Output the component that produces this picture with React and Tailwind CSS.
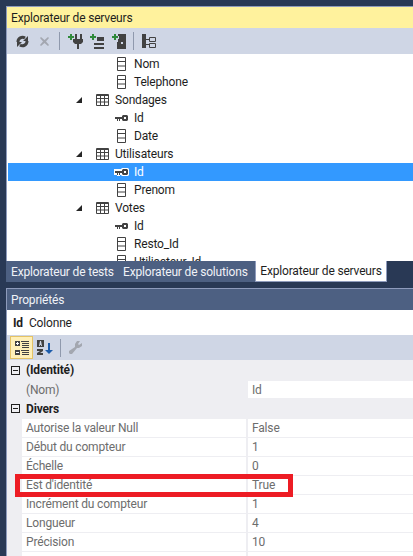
import React from 'react';

const ColumnIcon = () => (
    <svg width="9" height="14" viewBox="0 0 9 14" className="shrink-0" fill="none" stroke="#424242">
        <path d="M.5.5h8v13h-8zM.5 4.500h8M.5 9h8" />
    </svg>
);

const KeyIcon = ({ light }) => (
    <svg width="15" height="8" viewBox="0 0 15 8" className="shrink-0">
        {light && <path d="M0 1h7l1-1h6l1 1v6l-1 1h-6l-1-1h-1v1h-3v-1h-3z" fill="#fff" />}
        <path d="M1 3h7v2h-2v2h-1v-2h-1v2h-1v-2h-2z" fill="#424242" />
        <path fillRule="evenodd" d="M8 2l1-1h4l1 1v4l-1 1h-4l-1-1zM10 3v2h2v-2z" fill="#424242" />
    </svg>
);

const TableIcon = () => (
    <svg width="13" height="12" viewBox="0 0 13 12" className="shrink-0" fill="none" stroke="#424242">
        <path d="M.5.5h12v11h-12zM.5 1.500h12M.5 4.500h12M.5 8h12M4.500 1v10M8.500 1v10" />
    </svg>
);

const Triangle = () => (
    <svg width="6" height="6" viewBox="0 0 6 6" className="shrink-0">
        <path d="M6 0v6h-6z" fill="#262626" />
    </svg>
);

const Plus = ({ y = 0 }) => (
    <path d={`M2 ${y}h2v2h2v2h-2v2h-2v-2h-2v-2h2z`} fill="#2f8a3b" />
);

const RefreshIcon = () => (
    <svg width="13" height="13" viewBox="0 0 13 13" className="shrink-0" fill="none">
        <path d="M2 7a4.500 4.500 0 0 1 7-4" stroke="#424242" strokeWidth="3" />
        <path d="M11 6a4.500 4.500 0 0 1-7 4" stroke="#424242" strokeWidth="3" />
        <path d="M12 1v5h-5zM1 12v-5h5z" fill="#424242" />
    </svg>
);

const PlugIcon = () => (
    <svg width="15" height="15" viewBox="0 0 15 15" className="shrink-0">
        <Plus />
        <path d="M7 0h2v5h3v-5h2v5h1v3l-2 2h-2v6h-2v-6h-2l-2-2v-3h2z" fill="#424242" />
    </svg>
);

const ServerIcon = () => (
    <svg width="14" height="15" viewBox="0 0 14 15" className="shrink-0">
        <Plus />
        <path d="M7 3h7v4h-7zM4 9h10v2h-10zM4 13h10v2h-10z" fill="#424242" />
    </svg>
);

const DbIcon = () => (
    <svg width="14" height="15" viewBox="0 0 14 15" className="shrink-0">
        <path d="M6 0h8v15h-9v-7h1z" fill="#424242" />
        <path d="M9 8h2v2h-2z" fill="#cfd6e5" />
        <path d="M0 2h2v-2h3v2h2v3h-2v2h-3v-2h-2z" fill="#cfd6e5" />
        <Plus y={0} />
    </svg>
);

const HierarchyIcon = () => (
    <svg width="14" height="14" viewBox="0 0 14 14" className="shrink-0" fill="none">
        <path d="M0 0h4v14h-4z" fill="#424242" />
        <path d="M4 5.500h3M4 10.500h3M7.500 3.500h6v4h-6zM7.500 9.500h6v4h-6z" stroke="#424242" />
    </svg>
);

const CategorizedIcon = () => (
    <svg width="14" height="14" viewBox="0 0 14 14" className="shrink-0">
        <path d="M0 0h5v5h-5zM0 9h5v5h-5z" fill="#424242" />
        <path d="M1 2h3v1h-3zM1 11h3v1h-3zM2 1h1v3h-1z" fill="#fff" />
        <path d="M6 0h8v1h-8zM7 2h7v1h-7zM7 4h7v1h-7zM7 6h7v1h-7zM6 9h8v1h-8zM7 11h7v1h-7zM7 13h7v1h-7z" fill="#424242" />
    </svg>
);

const AlphaIcon = () => (
    <svg width="16" height="15" viewBox="0 0 16 15" className="shrink-0">
        <path d="M0 0h7v7h-7z" fill="#424242" />
        <path d="M3 1h1l1 5h-1v-1h-1v1h-1z" fill="#cfd6e5" />
        <path d="M0 9h6v2l-3 2h3v2h-6v-2l3-2h-3z" fill="#424242" />
        <path d="M11 3h2v7h3l-4 4-4-4h3z" fill="#1c5cab" />
    </svg>
);

const WrenchIcon = () => (
    <svg width="13" height="13" viewBox="0 0 13 13" className="shrink-0">
        <path d="M8 0h3l-2 3 1 1 3-2v3l-3 2h-2l-5 6h-2l-1-1v-2l6-4v-3z" fill="#a3a7b0" />
    </svg>
);

const MinusBox = () => (
    <div className="flex h-[9px] w-[9px] shrink-0 items-center justify-center border border-[#1e1e1e]">
        <div className="h-px w-[5px] bg-[#1e1e1e]" />
    </div>
);

const Separator = ({ className }) => <div className={`h-[18px] w-px bg-[#8f99ad] ${className}`} />;

const treeRows = [
    { kind: 'column', label: 'Nom' },
    { kind: 'column', label: 'Telephone' },
    { kind: 'table', label: 'Sondages' },
    { kind: 'key', label: 'Id' },
    { kind: 'column', label: 'Date' },
    { kind: 'table', label: 'Utilisateurs' },
    { kind: 'key', label: 'Id', selected: true },
    { kind: 'column', label: 'Prenom' },
    { kind: 'table', label: 'Votes' },
    { kind: 'key', label: 'Id' },
    { kind: 'column', label: 'Resto_Id' },
    { kind: 'column', label: 'Utilisateur_Id' },
];

function TreeRow({ kind, label, selected }) {
    if (kind === 'table') {
        return (
            <div className="flex h-[18px] shrink-0 items-center pl-[68px] text-[#1e1e1e]">
                <Triangle />
                <div className="ml-[14px]"><TableIcon /></div>
                <span className="ml-[6px]">{label}</span>
            </div>
        );
    }
    return (
        <div className={`flex h-[18px] shrink-0 items-center pl-[100px] ${selected ? 'bg-[#3399ff] text-white' : 'text-[#1e1e1e]'}`}>
            <div className="flex w-[26px] shrink-0 justify-center">
                {kind === 'key' ? <KeyIcon light={selected} /> : <ColumnIcon />}
            </div>
            <span>{label}</span>
        </div>
    );
}

const props = [
    ['Autorise la valeur Null', 'False'],
    ['Début du compteur', '1'],
    ['Échelle', '0'],
    ["Est d'identité", 'True'],
    ['Incrément du compteur', '1'],
    ['Longueur', '4'],
    ['Précision', '10'],
    ['', ''],
];

function PropRow({ name, value }) {
    return (
        <div className="flex h-[19px] shrink-0 border-b border-[#eeeef2] bg-white text-[#6d6d6d]">
            <div className="flex w-[226px] shrink-0 items-center border-r-2 border-[#eeeef2] pl-[4px]">{name}</div>
            <div className="flex items-center pl-[4px]">{value}</div>
        </div>
    );
}

export default function App() {
    return (
        <div className="relative flex h-[556px] w-[413px] flex-col overflow-hidden whitespace-nowrap bg-[#293955] pl-[6px] pt-[6px] font-['Roboto',sans-serif] text-[12px] tracking-[-0.17px]">
            {/* Explorateur de serveurs */}
            <div className="flex h-[255px] shrink-0 flex-col border-l border-t border-[#8e9bbc]">
                <div className="flex h-[21px] shrink-0 items-center bg-[#fff29d] pl-[4px] text-[#1e1e1e]">Explorateur de serveurs</div>
                <div className="flex h-[26px] shrink-0 items-center bg-[#cfd6e5] pl-[9px]">
                    <RefreshIcon />
                    <svg width="9" height="9" viewBox="0 0 9 9" className="ml-[11px] shrink-0">
                        <path d="M1 0l3.500 3 3.500-3 1 1-3 3.500 3 3.500-1 1-3.500-3-3.500 3-1-1 3-3.500-3-3.500z" fill="#a3a7b0" />
                    </svg>
                    <Separator className="ml-[10px]" />
                    <div className="ml-[8px]"><PlugIcon /></div>
                    <div className="ml-[7px]"><ServerIcon /></div>
                    <div className="ml-[8px]"><DbIcon /></div>
                    <Separator className="ml-[7px]" />
                    <div className="ml-[8px]"><HierarchyIcon /></div>
                </div>
                <div className="flex min-h-0 flex-1 flex-col overflow-hidden bg-white pl-px pt-px">
                    {treeRows.map((row, i) => <TreeRow key={i} {...row} />)}
                </div>
            </div>

            {/* Onglets */}
            <div className="flex h-[21px] shrink-0 text-[#f0f2f7]">
                <div className="flex w-[112px] items-center bg-[#4d6082] pl-[5px]">Explorateur de tests</div>
                <div className="flex w-[137px] items-center bg-[#4d6082] pl-[5px]">Explorateur de solutions</div>
                <div className="flex w-[132px] items-center justify-center border-x border-b border-[#8e9bbc] bg-white text-[#1e1e1e]">Explorateur de serveurs</div>
            </div>

            {/* Propriétés */}
            <div className="mt-[6px] flex min-h-0 flex-1 flex-col border-l border-t border-[#8e9bbc] bg-[#eeeef2]">
                <div className="flex h-[21px] shrink-0 items-center bg-[#4d6082] pl-[4px] text-[#f0f2f7]">Propriétés</div>
                <div className="flex h-[25px] shrink-0 items-center bg-white pl-[6px] text-[#1e1e1e]">
                    <span className="font-bold">Id</span>
                    <span className="ml-[6px]">Colonne</span>
                </div>
                <div className="flex h-[25px] shrink-0 items-center bg-[#cfd6e5] pl-[3px]">
                    <div className="flex h-[23px] w-[23px] items-center justify-center border border-[#e5c365] bg-[#fff0b8]">
                        <CategorizedIcon />
                    </div>
                    <div className="ml-[4px]"><AlphaIcon /></div>
                    <Separator className="ml-[7px]" />
                    <div className="ml-[8px]"><WrenchIcon /></div>
                </div>
                <div className="flex h-[19px] shrink-0 items-center pl-[4px] pt-[1px] font-bold text-[#1e1e1e]">
                    <MinusBox />
                    <span className="ml-[6px]">(Identité)</span>
                </div>
                <div className="mt-[2px] flex h-[17px] shrink-0 text-[#6d6d6d]">
                    <div className="flex w-[241px] shrink-0 items-center pl-[19px]">(Nom)</div>
                    <div className="flex flex-1 items-center bg-white pl-[4px]">Id</div>
                </div>
                <div className="flex h-[21px] shrink-0 items-center pl-[4px] font-bold text-[#1e1e1e]">
                    <MinusBox />
                    <span className="ml-[6px]">Divers</span>
                </div>
                <div className="flex flex-col pl-[15px]">
                    {props.map(([name, value], i) => <PropRow key={i} name={name} value={value} />)}
                </div>
            </div>

            {/* Encadré rouge */}
            <div className="absolute left-[15px] top-[474px] h-[23px] w-[278px] border-[5px] border-[#ed1c24]" />
        </div>
    );
}
